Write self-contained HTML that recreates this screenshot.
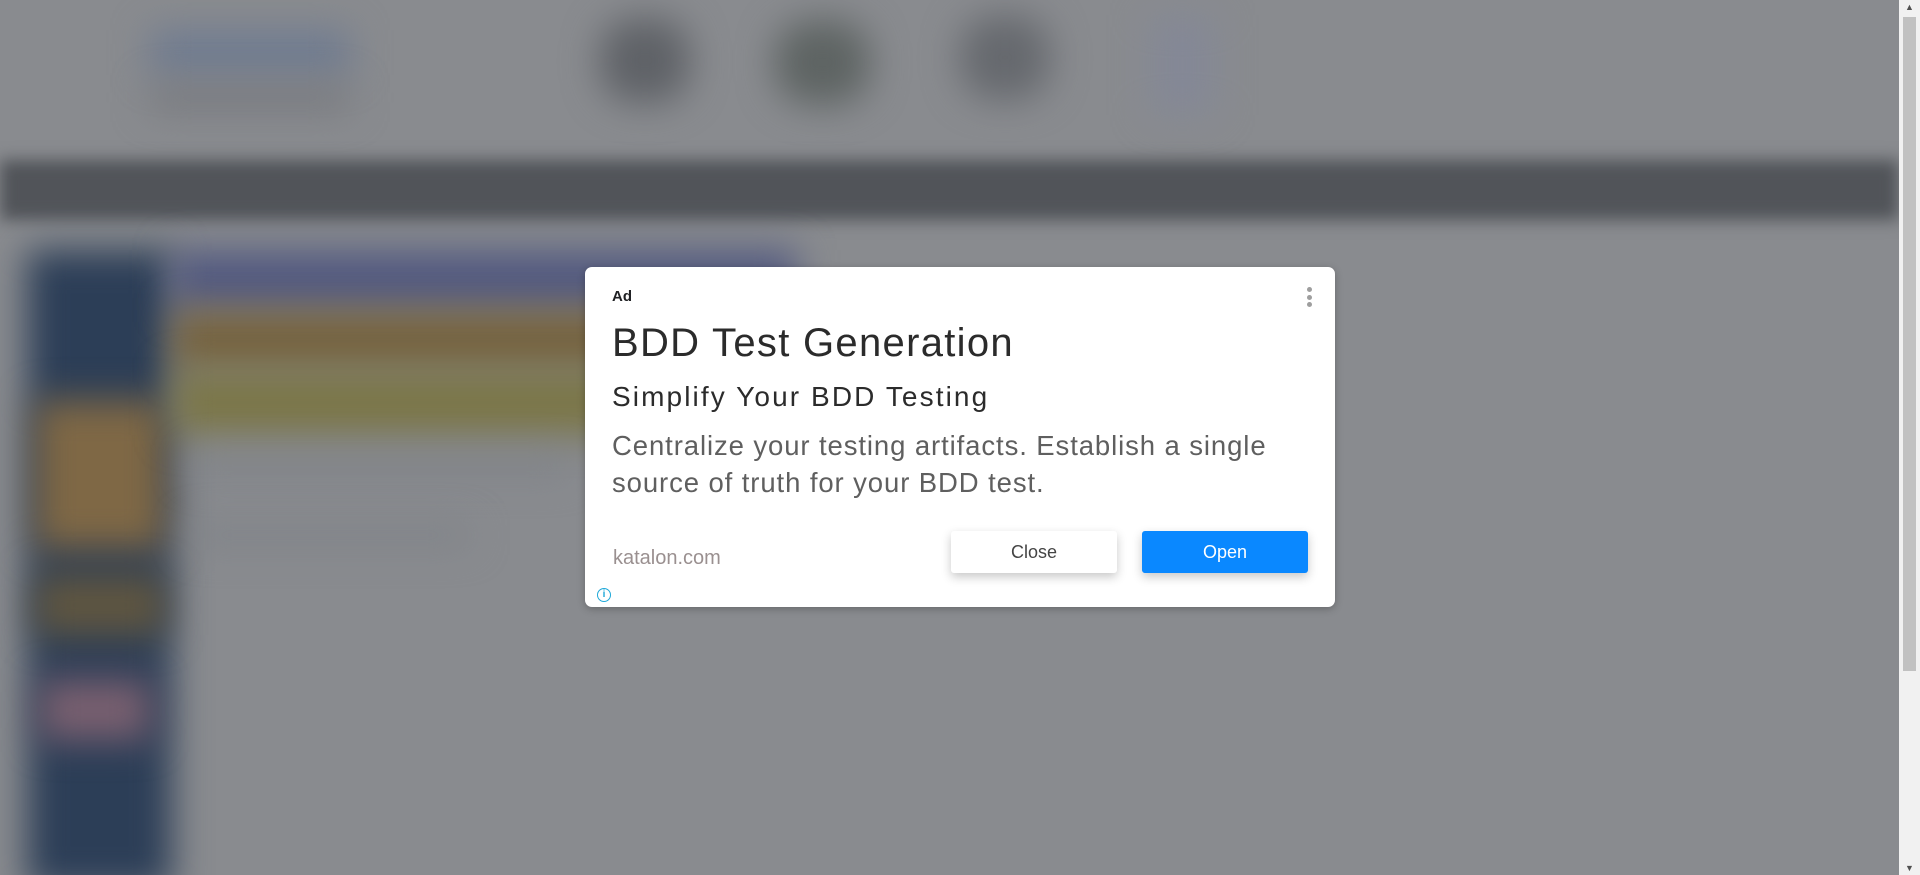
<!DOCTYPE html>
<html><head><meta charset="utf-8"><style>
html,body{margin:0;padding:0;width:1920px;height:875px;overflow:hidden;background:#8a8c90;font-family:"Liberation Sans",sans-serif}
.bg{position:absolute;left:0;top:0;width:1899px;height:875px;overflow:hidden;background:#898b8f}
.b{position:absolute;filter:blur(18px)}
.sb{position:absolute;right:0;top:0;width:21px;height:875px;background:#f1f1f1}
.sb .t{position:absolute;left:4px;top:17px;width:13px;height:654px;background:#c1c1c1}
.sb .a1,.sb .a2{position:absolute;left:6px;font-size:9px;color:#505050}
.dlg{position:absolute;left:585px;top:267px;width:750px;height:340px;background:#fff;border-radius:7px;box-shadow:0 2px 8px rgba(0,0,0,.25)}
.dlg div{position:absolute;white-space:nowrap}
.btn{height:42px;width:166px;border-radius:3px;box-shadow:0 4px 10px rgba(0,0,0,.22);font-size:18px;text-align:center;line-height:42px}
.dot{width:5px;height:5px;border-radius:50%;background:#9e9e9e}
</style></head><body>
<div class="bg">
 <div class="b" style="left:150px;top:30px;width:200px;height:45px;background:#6f7b90"></div>
 <div class="b" style="left:150px;top:85px;width:200px;height:25px;background:#77797e"></div>
 <div class="b" style="left:600px;top:18px;width:90px;height:85px;background:#5f6267;border-radius:40%"></div>
 <div class="b" style="left:775px;top:20px;width:95px;height:85px;background:#5e6463;border-radius:40%"></div>
 <div class="b" style="left:960px;top:15px;width:90px;height:85px;background:#66696e;border-radius:40%"></div>
 <div class="b" style="left:1150px;top:15px;width:65px;height:100px;background:#848896"></div>
 <div class="b" style="left:0;top:160px;width:1899px;height:60px;background:#515459;filter:blur(8px)"></div>
 <div class="b" style="left:27px;top:250px;width:145px;height:640px;background:#2c3e57"></div>
 <div class="b" style="left:35px;top:400px;width:130px;height:150px;background:#7f6845"></div>
 <div class="b" style="left:35px;top:575px;width:130px;height:60px;background:#605640"></div>
 <div class="b" style="left:40px;top:680px;width:110px;height:60px;background:#7a6070"></div>
 <div class="b" style="left:172px;top:250px;width:625px;height:60px;background:#535a80"></div>
 <div class="b" style="left:172px;top:310px;width:600px;height:60px;background:#76633f"></div>
 <div class="b" style="left:172px;top:370px;width:600px;height:65px;background:#7b7648"></div>
 <div class="b" style="left:190px;top:455px;width:380px;height:20px;background:#7f8287"></div>
 <div class="b" style="left:190px;top:525px;width:280px;height:20px;background:#7f8287"></div>
</div>
<div class="sb"><div class="a1" style="top:2px">▲</div><div class="t"></div><div class="a2" style="bottom:2px">▼</div></div>
<div class="dlg">
 <div style="left:27px;top:21px;font-size:15px;font-weight:bold;color:#202124">Ad</div>
 <div class="dot" style="left:722px;top:20px"></div>
 <div class="dot" style="left:722px;top:28px"></div>
 <div class="dot" style="left:722px;top:35px"></div>
 <div style="left:27px;top:54px;font-size:40px;color:#2b2b2b;letter-spacing:1.3px">BDD Test Generation</div>
 <div style="left:27px;top:114px;font-size:28px;color:#2b2b2b;letter-spacing:2.1px">Simplify Your BDD Testing</div>
 <div style="left:27px;top:160px;font-size:27.5px;line-height:37px;color:#5f5f5f;letter-spacing:0.9px">Centralize your testing artifacts. Establish a single<br>source of truth for your BDD test.</div>
 <div style="left:28px;top:280px;font-size:20px;color:#9a9090">katalon.com</div>
 <div class="btn" style="left:366px;top:264px;background:#fff;color:#444">Close</div>
 <div class="btn" style="left:557px;top:264px;background:#0a88ff;color:#fff">Open</div>
 <div style="left:12px;top:321px;width:12px;height:12px;border:1.5px solid #1fa8d8;border-radius:50%;font-size:10px;line-height:12px;text-align:center;color:#1fa8d8;font-weight:bold">i</div>
</div>
</body></html>
